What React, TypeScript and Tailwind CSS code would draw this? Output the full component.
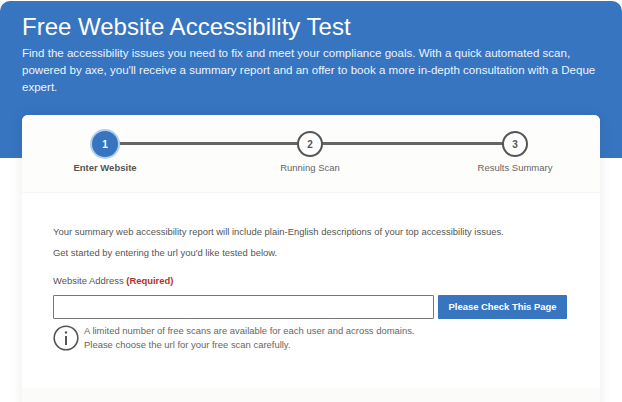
const steps = [
  { num: "1", label: "Enter Website", active: true },
  { num: "2", label: "Running Scan", active: false },
  { num: "3", label: "Results Summary", active: false },
];

export default function App() {
  return (
    <div className="w-[622px] h-[402px] overflow-hidden bg-white font-['Liberation_Sans',Arial,sans-serif] text-[#555]">
      {/* Blue header */}
      <div className="h-[157px] bg-[#3775c1] rounded-t-[10px] mt-px px-[22px] pt-[11px] text-white">
        <h1 className="text-[24px] leading-[30px] font-normal">Free Website Accessibility Test</h1>
        <p className="mt-[3px] text-[11.55px] leading-[17px] text-[#eef3fa] w-[580px]">
          Find the accessibility issues you need to fix and meet your compliance goals. With a quick automated scan,
          powered by axe, you'll receive a summary report and an offer to book a more in-depth consultation with a Deque
          expert.
        </p>
      </div>

      {/* Card */}
      <div className="relative -mt-[43px] mx-[22px] w-[578px] h-[340px] bg-white rounded-t-[6px] shadow-[0_0_14px_rgba(0,0,0,0.08)]">
        {/* Stepper */}
        <div className="relative h-[78px] bg-[#fdfdfc] rounded-t-[6px] border-b border-[#f6f6f4] flex justify-between pl-[28px] pr-[30px] pt-[16px]">
          <div className="absolute left-[84px] right-[85px] top-[27px] h-[3px] bg-[#666]" />
          {steps.map((s) => (
            <div key={s.num} className="relative w-[110px] flex flex-col items-center">
              {s.active ? (
                <div className="w-[26px] h-[26px] rounded-full bg-[#3775c1] ring-[2px] ring-[#b4cfec] text-white text-[10px] font-bold flex items-center justify-center">
                  {s.num}
                </div>
              ) : (
                <div className="w-[26px] h-[26px] rounded-full bg-white border-[2.5px] border-[#555] text-[#555] text-[10px] font-bold flex items-center justify-center">
                  {s.num}
                </div>
              )}
              <div className={`mt-[4px] text-[9.5px] leading-[14px] whitespace-nowrap ${s.active ? "font-bold text-[#555]" : "text-[#666]"}`}>
                {s.label}
              </div>
            </div>
          ))}
        </div>

        {/* Body */}
        <div className="px-[31px] pt-[32px] text-[9.45px] leading-[14px]">
          <p>Your summary web accessibility report will include plain-English descriptions of your top accessibility issues.</p>
          <p className="mt-[7px]">Get started by entering the url you'd like tested below.</p>
          <div className="mt-[14px]">
            Website Address <span className="font-bold text-[#b5322c]">(Required)</span>
          </div>
          <div className="mt-[7px] flex gap-[4px]">
            <input className="w-[381px] h-[24px] bg-white border border-[#777] rounded-[1px]" aria-label="Website Address" />
            <button className="w-[129px] h-[24px] bg-[#3775c1] text-white text-[9.45px] font-bold rounded-[1px]">
              Please Check This Page
            </button>
          </div>
          <div className="mt-[5px] flex gap-[5px] text-[#666] leading-[14px]">
            <svg viewBox="0 0 26 26" className="w-[26px] h-[26px] mt-[1px] shrink-0 text-[#555]" fill="none" stroke="currentColor">
              <circle cx="13" cy="13" r="11.8" strokeWidth="1.6" />
              <path d="M13 11v9" strokeWidth="2" />
              <circle cx="13" cy="7.5" r="1.2" fill="currentColor" stroke="none" />
            </svg>
            <p>
              A limited number of free scans are available for each user and across domains.
              <br />
              Please choose the url for your free scan carefully.
            </p>
          </div>
        </div>

        {/* Footer tint */}
        <div className="absolute left-0 right-0 top-[273px] bottom-0 bg-[#fbfbfa]" />
      </div>
    </div>
  );
}
